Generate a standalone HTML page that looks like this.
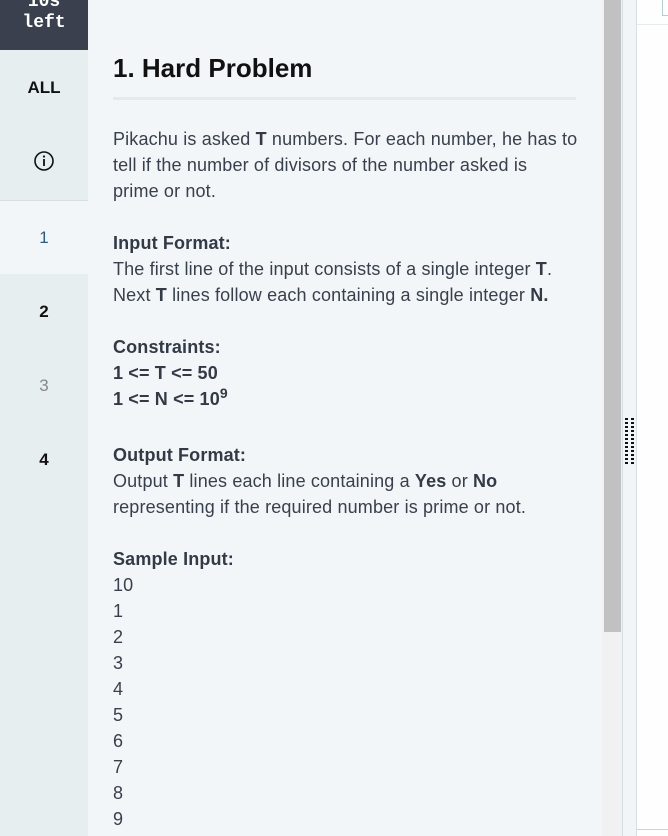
<!DOCTYPE html>
<html><head><meta charset="utf-8"><style>
*{margin:0;padding:0;box-sizing:border-box}
body{width:668px;height:836px;overflow:hidden;background:#f2f6f8;font-family:"Liberation Sans",sans-serif;position:relative;color:#39404d}
.side{position:absolute;left:0;top:0;width:88px;height:836px;background:#e7eef0}
.timer{position:absolute;left:0;top:0;width:88px;height:50px;background:#3a404d;color:#fff;font-family:"Liberation Mono",monospace;font-weight:bold;font-size:18px;text-align:center;line-height:21px}
.it{position:absolute;left:0;width:88px;text-align:center;font-size:17px}
.sel{position:absolute;left:0;top:200px;width:88px;height:74px;background:#f2f6f8;border-top:1px solid #d8dfe1}
h1{position:absolute;left:113px;top:53px;font-size:26px;font-weight:bold;color:#111;white-space:nowrap}
.hr{position:absolute;left:113px;top:97px;width:463px;height:3px;background:#e4eaec}
.p{position:absolute;left:113px;width:480px;font-size:18px;letter-spacing:0.15px;line-height:26px;white-space:nowrap}
b{color:#333a46}
</style></head><body>
<div class="side">
<div class="timer"><div style="margin-top:-8px">10s</div><div>left</div></div>
<div class="it" style="top:78px;font-weight:bold;color:#111">ALL</div>
<div class="it" style="top:150px"><svg width="22" height="22" viewBox="0 0 22 22"><circle cx="11" cy="11" r="9" fill="none" stroke="#111" stroke-width="1.6"/><rect x="10.1" y="9" width="1.8" height="7" fill="#111"/><circle cx="11" cy="6.5" r="1.1" fill="#111"/></svg></div>
<div class="sel"></div>
<div class="it" style="top:228px;color:#2b5c86">1</div>
<div class="it" style="top:302px;font-weight:bold;color:#111">2</div>
<div class="it" style="top:376px;color:#888">3</div>
<div class="it" style="top:450px;font-weight:bold;color:#111">4</div>
</div>
<h1>1. Hard Problem</h1>
<div class="hr"></div>
<div class="p" style="top:126px">Pikachu is asked <b>T</b> numbers. For each number, he has to<br>tell if the number of divisors of the number asked is<br>prime or not.</div>
<div class="p" style="top:230px"><b>Input Format:</b><br>The first line of the input consists of a single integer <b>T</b>.<br>Next <b>T</b> lines follow each containing a single integer <b>N.</b></div>
<div class="p" style="top:334px"><b>Constraints:<br>1 &lt;= T &lt;= 50<br>1 &lt;= N &lt;= 10<sup style="font-size:14px;line-height:0">9</sup></b></div>
<div class="p" style="top:442px"><b>Output Format:</b><br>Output <b>T</b> lines each line containing a <b>Yes</b> or <b>No</b><br>representing if the required number is prime or not.</div>
<div class="p" style="top:546px"><b>Sample Input:</b><br>10<br>1<br>2<br>3<br>4<br>5<br>6<br>7<br>8<br>9</div>
<div style="position:absolute;left:602px;top:0;width:20px;height:836px;background:#f1f1f1"></div>
<div style="position:absolute;left:604px;top:0;width:17px;height:632px;background:#c1c1c1"></div>
<div style="position:absolute;left:622px;top:0;width:15px;height:836px;background:#f1f5f7;border-left:1px solid #d6e0e3;border-right:1px solid #d6e0e3"></div>
<div style="position:absolute;left:625px;top:418px;width:10px;height:46px;background:repeating-linear-gradient(to bottom,#111 0 2px,transparent 2px 4px);-webkit-mask:repeating-linear-gradient(to right,#000 0 3px,transparent 3px 6px)"></div>
<div style="position:absolute;left:637px;top:0;width:31px;height:836px;background:#fefefe"></div>
<div style="position:absolute;left:637px;top:24px;width:31px;height:1px;background:#e6ecee"></div>
<div style="position:absolute;left:662px;top:0;width:8px;height:16px;border-left:1px solid #b7cbd2;border-bottom:1px solid #b7cbd2"></div>
<div style="position:absolute;left:637px;top:829px;width:31px;height:1px;background:#c9d4d8"></div>
</body></html>
